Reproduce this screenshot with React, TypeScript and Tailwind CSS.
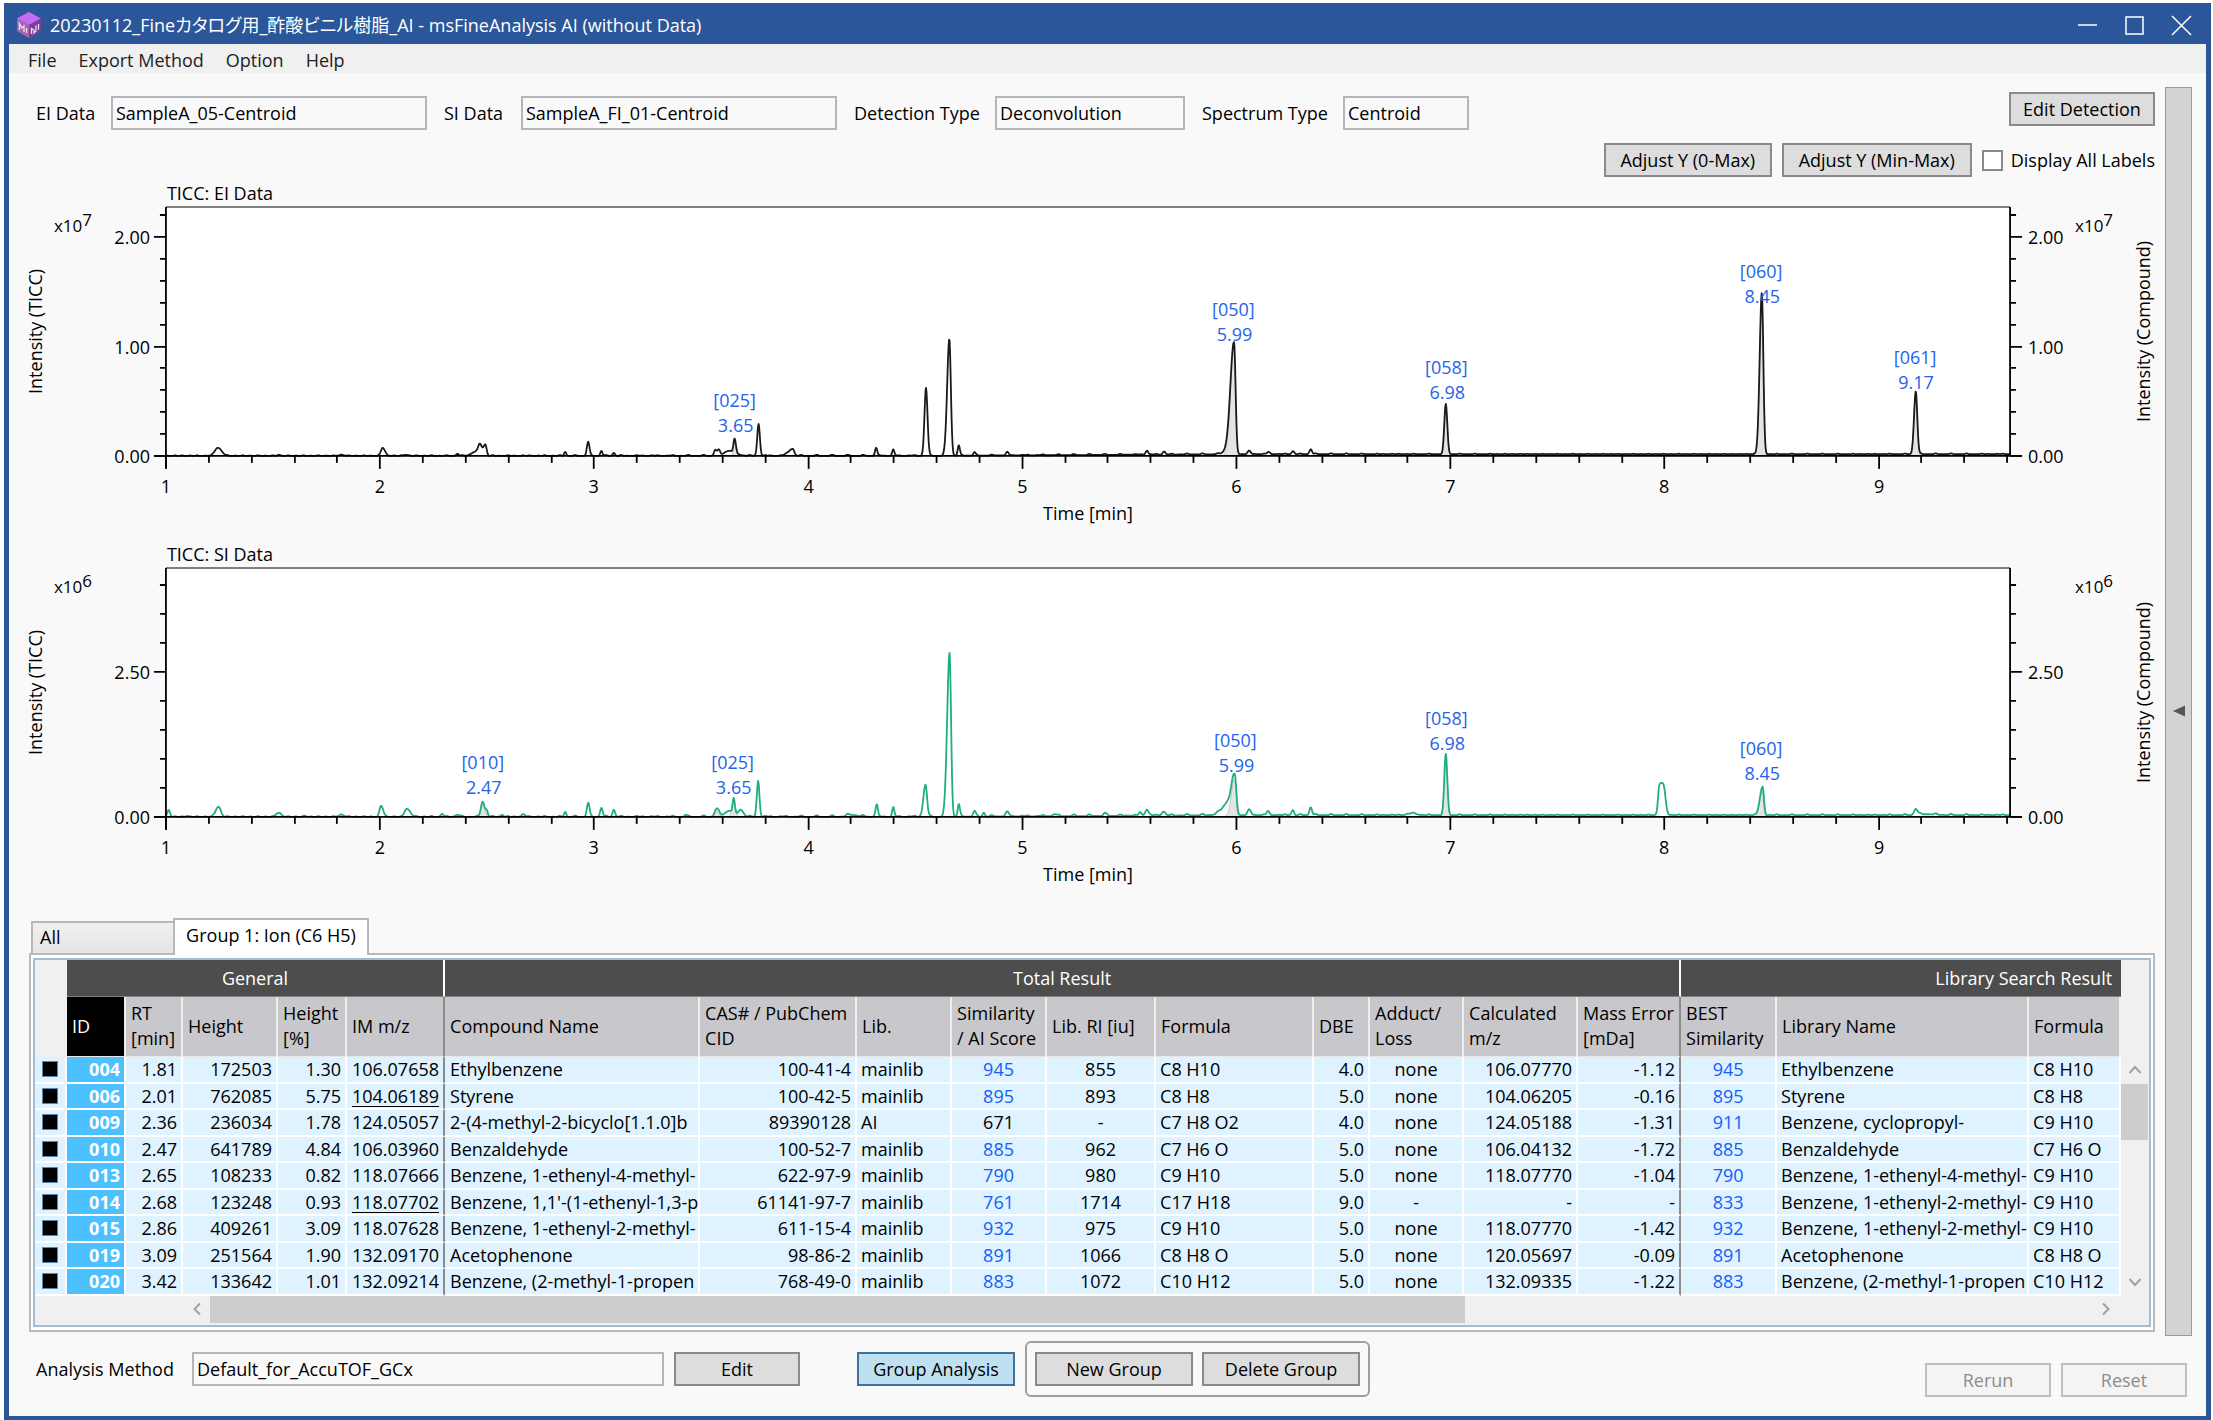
import { useState } from 'react';
import type { ReactNode } from 'react';
import clsx from 'clsx';

// [retention time, height in px, left sigma, right sigma]
type Peak = [number, number, number, number];

interface PeakLabel {
  id: string;
  rt: string;
  x: number;
  y: number;
}

interface ChartProps {
  title: string;
  exponent: string;
  color: string;
  peaks: Peak[];
  compounds: Peak[];
  labels: PeakLabel[];
  noise: number;
  unit: number;
  minorStep: number;
  majorEvery: number;
  minorCount: number;
}

const LEFT = 146;
const RIGHT = 1991;
const TOP = 25;
const BASE = 274;
const PER_MIN = 214.2;

const timeToX = (t: number) => LEFT + (t - 1) * PER_MIN;

function gauss(t: number, [center, height, left, right]: Peak) {
  const s = t < center ? left : right;
  return height * Math.exp(-((t - center) ** 2) / (2 * s * s));
}

function baseline(t: number, noise: number) {
  const drift = Math.min(1.6, Math.max(0, (t - 4.6) * 1.2));
  const ripple = Math.max(0, Math.sin(t * 47) * Math.sin(t * 131) + Math.sin(t * 83) * 0.4);
  return drift + ripple * noise;
}

function tracePath(peaks: Peak[], noise: number) {
  const points: string[] = [];
  for (let x = LEFT; x <= RIGHT; x += 0.5) {
    const t = 1 + (x - LEFT) / PER_MIN;
    const h = peaks.reduce((sum, p) => sum + gauss(t, p), baseline(t, noise));
    points.push(`${x} ${(BASE - h).toFixed(1)}`);
  }
  return `M${points.join('L')}`;
}

function compoundPath(peak: Peak) {
  const from = timeToX(peak[0] - peak[2] * 3);
  const to = timeToX(peak[0] + peak[3] * 3);
  const points = [`${from} ${BASE}`];
  for (let x = from; x <= to; x += 0.5) {
    points.push(`${x} ${(BASE - gauss(1 + (x - LEFT) / PER_MIN, peak)).toFixed(1)}`);
  }
  return `M${points.join('L')}L${to} ${BASE}Z`;
}

const EI_PEAKS: Peak[] = [
  [1.242, 8, 0.014, 0.018], [1.526, 1, 0.006, 0.006], [1.82, 1, 0.01, 0.01],
  [2.012, 8, 0.008, 0.011], [2.12, 1, 0.01, 0.01], [2.362, 2, 0.006, 0.006],
  [2.445, 4, 0.018, 0.014], [2.467, 11, 0.008, 0.01], [2.492, 11, 0.008, 0.006],
  [2.865, 4, 0.005, 0.005], [2.972, 14, 0.006, 0.006], [3.034, 5, 0.005, 0.005],
  [3.092, 3, 0.005, 0.005], [3.566, 6, 0.006, 0.006], [3.582, 5, 0.006, 0.006],
  [3.63, 5, 0.022, 0.03], [3.656, 13, 0.005, 0.006], [3.768, 32, 0.006, 0.006],
  [3.928, 7, 0.02, 0.007], [4.317, 8, 0.005, 0.005], [4.397, 6, 0.005, 0.005],
  [4.55, 68, 0.007, 0.007], [4.659, 117, 0.01, 0.007], [4.703, 10, 0.005, 0.005],
  [4.776, 3, 0.005, 0.005], [4.93, 3, 0.006, 0.006], [5.582, 4, 0.006, 0.006],
  [5.662, 3, 0.006, 0.006], [5.989, 110, 0.016, 0.007], [5.97, 8, 0.02, 0.01],
  [6.06, 3, 0.007, 0.007], [6.149, 2, 0.007, 0.007], [6.264, 3, 0.006, 0.006],
  [6.347, 5, 0.006, 0.006], [6.978, 50, 0.007, 0.007], [8.454, 161, 0.01, 0.007],
  [9.173, 63, 0.008, 0.007],
];

const EI_COMPOUNDS: Peak[] = [
  [3.656, 13, 0.005, 0.006], [5.989, 108, 0.016, 0.007], [6.978, 48, 0.007, 0.007],
  [8.454, 159, 0.01, 0.007], [9.173, 61, 0.008, 0.007],
];

const EI_LABELS: PeakLabel[] = [
  { id: '[025]', rt: '3.65', x: 715, y: 218 },
  { id: '[050]', rt: '5.99', x: 1214, y: 127 },
  { id: '[058]', rt: '6.98', x: 1427, y: 185 },
  { id: '[060]', rt: '8.45', x: 1742, y: 89 },
  { id: '[061]', rt: '9.17', x: 1896, y: 175 },
];

const SI_PEAKS: Peak[] = [
  [1.013, 7, 0.006, 0.006], [1.1, 1, 0.006, 0.006], [1.245, 10, 0.013, 0.011],
  [1.526, 4, 0.012, 0.012], [1.65, 1, 0.006, 0.006], [1.82, 2, 0.012, 0.012],
  [2.005, 11, 0.007, 0.01], [2.124, 8, 0.01, 0.016], [2.29, 3, 0.006, 0.006],
  [2.362, 2, 0.01, 0.01], [2.479, 15, 0.008, 0.007], [2.497, 7, 0.007, 0.006],
  [2.57, 2, 0.006, 0.006], [2.67, 2, 0.01, 0.01], [2.865, 5, 0.005, 0.005],
  [2.972, 14, 0.006, 0.006], [3.034, 9, 0.006, 0.006], [3.092, 7, 0.006, 0.006],
  [3.427, 2, 0.005, 0.005], [3.572, 8, 0.009, 0.01], [3.632, 6, 0.022, 0.02],
  [3.652, 14, 0.005, 0.005], [3.684, 7, 0.011, 0.013], [3.766, 36, 0.006, 0.006],
  [4.2, 2, 0.02, 0.03], [4.32, 12, 0.006, 0.005], [4.397, 9, 0.005, 0.005],
  [4.548, 32, 0.01, 0.007], [4.66, 164, 0.011, 0.007], [4.703, 12, 0.005, 0.005],
  [4.776, 5, 0.006, 0.006], [4.82, 4, 0.005, 0.005], [4.93, 4, 0.008, 0.008],
  [5.15, 2, 0.008, 0.008], [5.39, 2, 0.008, 0.008], [5.55, 3, 0.006, 0.006],
  [5.582, 6, 0.008, 0.008], [5.66, 4, 0.008, 0.008], [5.972, 15, 0.032, 0.014],
  [5.993, 35, 0.013, 0.007], [6.06, 5, 0.008, 0.008], [6.147, 4, 0.006, 0.006],
  [6.264, 5, 0.007, 0.005], [6.347, 8, 0.006, 0.006], [6.82, 2, 0.02, 0.02],
  [6.978, 61, 0.007, 0.007], [7.975, 26, 0.006, 0.011], [7.996, 25, 0.011, 0.009],
  [8.458, 28, 0.013, 0.006], [9.173, 6, 0.008, 0.009], [9.22, 1, 0.03, 0.05],
];

const SI_COMPOUNDS: Peak[] = [
  [2.482, 15, 0.01, 0.008], [3.572, 6, 0.009, 0.01], [3.652, 14, 0.008, 0.008],
  [5.992, 38, 0.015, 0.006], [6.978, 58, 0.007, 0.007], [8.456, 26, 0.012, 0.006],
];

const SI_LABELS: PeakLabel[] = [
  { id: '[010]', rt: '2.47', x: 463, y: 219 },
  { id: '[025]', rt: '3.65', x: 713, y: 219 },
  { id: '[050]', rt: '5.99', x: 1216, y: 197 },
  { id: '[058]', rt: '6.98', x: 1427, y: 175 },
  { id: '[060]', rt: '8.45', x: 1742, y: 205 },
];

function Chart({ title, exponent, color, peaks, compounds, labels, noise, unit, minorStep, majorEvery, minorCount }: ChartProps) {
  const yTicks = Array.from({ length: minorCount + 1 }, (_, i) => ({
    y: Math.round(BASE - i * minorStep * unit),
    text: i % majorEvery === 0 ? (i * minorStep).toFixed(2) : null,
  }));
  const xTicks = Array.from({ length: 44 }, (_, i) => ({
    x: Math.round(timeToX(1 + i * 0.2)),
    text: i % 5 === 0 ? String(1 + i / 5) : null,
  }));
  const middle = (TOP + BASE) / 2;

  return (
    <svg viewBox="0 0 2136 361" className="block h-auto w-full text-[18px]" role="img" aria-label={title}>
      <text x={LEFT + 1} y={18}>{title}</text>
      <rect x={LEFT} y={TOP} width={RIGHT - LEFT} height={BASE - TOP} fill="#fff" />
      <path d={`M${LEFT} ${TOP}H${RIGHT}`} stroke="#808080" strokeWidth={2} />

      {compounds.map((peak) => (
        <path key={peak[0]} d={compoundPath(peak)} fill="#e4e4e6" stroke="#c4c4c4" />
      ))}
      <path d={tracePath(peaks, noise)} fill="none" stroke={color} strokeWidth={1.8} strokeLinejoin="round" />

      <path d={`M${LEFT} ${TOP}V${BASE + 13}M${RIGHT} ${TOP}V${BASE}M${LEFT - 12} ${BASE}H${RIGHT + 12}`} stroke="#000" strokeWidth={1.8} fill="none" />
      {yTicks.map(({ y, text }) => (
        <g key={y}>
          <path
            d={text ? `M${LEFT - 12} ${y}H${LEFT}M${RIGHT} ${y}H${RIGHT + 12}` : `M${LEFT - 6} ${y}H${LEFT}M${RIGHT} ${y}H${RIGHT + 6}`}
            stroke="#000"
            strokeWidth={1.8}
          />
          {text && (
            <>
              <text x={LEFT - 16} y={y + 7} textAnchor="end">{text}</text>
              <text x={RIGHT + 18} y={y + 7}>{text}</text>
            </>
          )}
        </g>
      ))}
      {xTicks.map(({ x, text }) => (
        <g key={x}>
          <path d={`M${x} ${BASE}V${text ? BASE + 13 : BASE + 7}`} stroke="#000" strokeWidth={1.8} />
          {text && <text x={x} y={BASE + 37} textAnchor="middle">{text}</text>}
        </g>
      ))}

      {labels.map(({ id, rt, x, y }) => (
        <g key={id} fill="#2563eb" textAnchor="middle">
          <text x={x} y={y + 7}>{id}</text>
          <text x={x + 1} y={y + 32}>{rt}</text>
        </g>
      ))}

      <g className="text-[17px]">
        <text x={34} y={50}>x10<tspan dy={-6}>{exponent}</tspan></text>
        <text x={2056} y={50}>x10<tspan dy={-6}>{exponent}</tspan></text>
      </g>
      <text transform={`translate(22 ${middle}) rotate(-90)`} textAnchor="middle">Intensity (TICC)</text>
      <text transform={`translate(2131 ${middle}) rotate(-90)`} textAnchor="middle">Intensity (Compound)</text>
      <text x={(LEFT + RIGHT) / 2} y={338} textAnchor="middle">Time [min]</text>
    </svg>
  );
}

interface ReadonlyFieldProps {
  id: string;
  label: string;
  value: string;
  labelWidth: string;
  width: string;
}

function ReadonlyField({ id, label, value, labelWidth, width }: ReadonlyFieldProps) {
  return (
    <div className="flex items-center">
      <label htmlFor={id} className={clsx('shrink-0 whitespace-nowrap', labelWidth)}>{label}</label>
      <input
        id={id}
        readOnly
        value={value}
        className={clsx('h-[34px] min-w-0 border-2 border-[#b4b6ba] bg-[#f9f9f9] px-[3px] outline-none', width)}
      />
    </div>
  );
}

interface ButtonProps {
  children: ReactNode;
  className?: string;
  active?: boolean;
  disabled?: boolean;
}

function Button({ children, className, active, disabled }: ButtonProps) {
  return (
    <button
      type="button"
      disabled={disabled}
      className={clsx(
        'h-[34px] shrink-0 whitespace-nowrap border-2',
        active && 'border-[#3f719c] bg-[#bee0f0]',
        disabled && 'border-[#bcbebf] bg-[#f4f4f4] text-[#8c8c8c]',
        !active && !disabled && 'border-[#8a8a8a] bg-[#dddddd]',
        className,
      )}
    >
      {children}
    </button>
  );
}

const COLUMNS = [
  { label: 'ID', width: 59, cell: 'bg-[#4dc1ff] pr-[4px] text-right font-bold text-white' },
  { label: 'RT\n[min]', width: 57, cell: 'pr-[4px] text-right' },
  { label: 'Height', width: 95, cell: 'pr-[4px] text-right' },
  { label: 'Height\n[%]', width: 69, cell: 'pr-[4px] text-right' },
  { label: 'IM m/z', width: 98, cell: 'pr-[4px] text-right' },
  { label: 'Compound Name', width: 255, cell: 'pl-[5px]' },
  { label: 'CAS# / PubChem\nCID', width: 157, cell: 'pr-[4px] text-right' },
  { label: 'Lib.', width: 95, cell: 'pl-1' },
  { label: 'Similarity\n/ AI Score', width: 95, cell: 'text-center text-blue-600' },
  { label: 'Lib. RI [iu]', width: 109, cell: 'text-center' },
  { label: 'Formula', width: 158, cell: 'pl-1' },
  { label: 'DBE', width: 56, cell: 'pr-[4px] text-right' },
  { label: 'Adduct/\nLoss', width: 94, cell: 'text-center' },
  { label: 'Calculated\nm/z', width: 114, cell: 'pr-[4px] text-right' },
  { label: 'Mass Error\n[mDa]', width: 103, cell: 'pr-[4px] text-right' },
  { label: 'BEST\nSimilarity', width: 96, cell: 'text-center text-blue-600' },
  { label: 'Library Name', width: 252, cell: 'pl-1' },
  { label: 'Formula', width: 92, cell: 'pl-1' },
];

// columns that end a header group get a dark divider
const GROUP_ENDS = [4, 14];

const ROWS = [
  ['004', '1.81', '172503', '1.30', '106.07658', 'Ethylbenzene', '100-41-4', 'mainlib', '945', '855', 'C8 H10', '4.0', 'none', '106.07770', '-1.12', '945', 'Ethylbenzene', 'C8 H10'],
  ['006', '2.01', '762085', '5.75', '104.06189', 'Styrene', '100-42-5', 'mainlib', '895', '893', 'C8 H8', '5.0', 'none', '104.06205', '-0.16', '895', 'Styrene', 'C8 H8'],
  ['009', '2.36', '236034', '1.78', '124.05057', '2-(4-methyl-2-bicyclo[1.1.0]b', '89390128', 'AI', '671', '-', 'C7 H8 O2', '4.0', 'none', '124.05188', '-1.31', '911', 'Benzene, cyclopropyl-', 'C9 H10'],
  ['010', '2.47', '641789', '4.84', '106.03960', 'Benzaldehyde', '100-52-7', 'mainlib', '885', '962', 'C7 H6 O', '5.0', 'none', '106.04132', '-1.72', '885', 'Benzaldehyde', 'C7 H6 O'],
  ['013', '2.65', '108233', '0.82', '118.07666', 'Benzene, 1-ethenyl-4-methyl-', '622-97-9', 'mainlib', '790', '980', 'C9 H10', '5.0', 'none', '118.07770', '-1.04', '790', 'Benzene, 1-ethenyl-4-methyl-', 'C9 H10'],
  ['014', '2.68', '123248', '0.93', '118.07702', "Benzene, 1,1'-(1-ethenyl-1,3-p", '61141-97-7', 'mainlib', '761', '1714', 'C17 H18', '9.0', '-', '-', '-', '833', 'Benzene, 1-ethenyl-2-methyl-', 'C9 H10'],
  ['015', '2.86', '409261', '3.09', '118.07628', 'Benzene, 1-ethenyl-2-methyl-', '611-15-4', 'mainlib', '932', '975', 'C9 H10', '5.0', 'none', '118.07770', '-1.42', '932', 'Benzene, 1-ethenyl-2-methyl-', 'C9 H10'],
  ['019', '3.09', '251564', '1.90', '132.09170', 'Acetophenone', '98-86-2', 'mainlib', '891', '1066', 'C8 H8 O', '5.0', 'none', '120.05697', '-0.09', '891', 'Acetophenone', 'C8 H8 O'],
  ['020', '3.42', '133642', '1.01', '132.09214', 'Benzene, (2-methyl-1-propen', '768-49-0', 'mainlib', '883', '1072', 'C10 H12', '5.0', 'none', '132.09335', '-1.22', '883', 'Benzene, (2-methyl-1-propen', 'C10 H12'],
];

const UNDERLINED = ['104.06189', '118.07702'];

function ResultTable() {
  return (
    <table className="w-full table-fixed border-separate border-spacing-0">
      <colgroup>
        <col style={{ width: 32 }} />
        {COLUMNS.map((column, i) => (
          <col key={i} style={{ width: column.width }} />
        ))}
      </colgroup>
      <thead>
        <tr className="h-[37px] text-white">
          <td rowSpan={2} className="p-0" />
          <th colSpan={5} className="border-r-2 border-b border-r-white border-b-[#808080] bg-[#4d4d4d] p-0 font-medium">General</th>
          <th colSpan={10} className="border-r-2 border-b border-r-white border-b-[#808080] bg-[#4d4d4d] p-0 font-medium">Total Result</th>
          <th colSpan={3} className="border-b border-b-[#808080] bg-[#4d4d4d] p-0 pr-[9px] text-right font-medium">Library Search Result</th>
        </tr>
        <tr className="h-[60px]">
          {COLUMNS.map((column, i) => (
            <th
              key={i}
              className={clsx(
                'border-r-2 border-b border-b-[#e8e8e8] p-0 pl-[5px] text-left align-middle font-normal leading-[25px] whitespace-pre',
                i === 0 ? 'bg-black text-white' : 'bg-[#c8c8cc]',
                GROUP_ENDS.includes(i) ? 'border-r-[#8c8c8c]' : 'border-r-[#eeeeee]',
              )}
            >
              {column.label}
            </th>
          ))}
        </tr>
      </thead>
      <tbody>
        {ROWS.map((row) => (
          <tr key={row[0]} className="odd:h-[27px] even:h-[26px]">
            <td className="border-r-2 border-b-2 border-white bg-[#def2ff] p-0">
              <div className="mx-auto size-4 border border-[#5b87ad] bg-black" />
            </td>
            {row.map((value, i) => (
              <td
                key={i}
                className={clsx(
                  'border-r-2 border-b-2 border-b-white py-0 leading-6 whitespace-nowrap',
                  i > 0 && 'bg-[#def2ff]',
                  COLUMNS[i].cell,
                  GROUP_ENDS.includes(i) ? 'border-r-[#8c8c8c]' : 'border-r-white',
                  value === '671' && 'text-black!',
                  UNDERLINED.includes(value) && 'underline underline-offset-3',
                )}
              >
                {value}
              </td>
            ))}
          </tr>
        ))}
      </tbody>
    </table>
  );
}

function Chevron({ d }: { d: string }) {
  return (
    <svg viewBox="0 0 16 16" className="size-4" fill="none" stroke="#a0a0a0" strokeWidth={2}>
      <path d={d} />
    </svg>
  );
}

function VerticalScrollbar() {
  return (
    <div className="flex w-[27px] shrink-0 flex-col pt-[97px]">
      <button type="button" aria-label="Scroll up" className="flex h-[27px] items-center justify-center">
        <Chevron d="M2.500 11L8 5L13.500 11" />
      </button>
      <div className="flex-1">
        <div className="h-14 bg-[#cdcdcd]" />
      </div>
      <button type="button" aria-label="Scroll down" className="flex h-[27px] items-center justify-center">
        <Chevron d="M2.500 5L8 11L13.500 5" />
      </button>
    </div>
  );
}

function HorizontalScrollbar() {
  return (
    <div className="flex h-[27px] pr-[30px] pl-[148px]">
      <button type="button" aria-label="Scroll left" className="flex w-[27px] items-center justify-center">
        <Chevron d="M11 2.500L5.500 8L11 13.500" />
      </button>
      <div className="flex-1">
        <div className="h-full w-2/3 bg-[#cdcdcd]" />
      </div>
      <button type="button" aria-label="Scroll right" className="flex w-[27px] items-center justify-center">
        <Chevron d="M5 2.500L10.500 8L5 13.500" />
      </button>
    </div>
  );
}

function AppIcon() {
  return (
    <svg viewBox="0 0 26 26" className="size-[26px]" aria-hidden="true">
      <path d="M13 0L25 6.500V19L13 26L1 19V6.500Z" fill="#8a4fb0" />
      <path d="M13 0L25 6.500L13 13L1 6.500Z" fill="#c56bf5" />
      <path d="M1 6.500L13 13V26L1 19Z" fill="#a566a8" />
      <path d="M13 13L25 6.500V19L13 26Z" fill="#7a3f9c" />
      <path d="M3.500 18V11.500L6 16L8 14V20M10.500 21V16M15.500 22V16.500L18 18V21L20 19V13.500M22.500 12V17.500" fill="none" stroke="#f0dcee" strokeWidth={1.300} />
    </svg>
  );
}

function TitleBar() {
  return (
    <header className="flex h-[41px] items-center justify-between bg-[#2b579a] pt-[3px] pr-[19px] pl-3 text-white">
      <div className="flex items-center gap-2">
        <AppIcon />
        <h1 className="whitespace-nowrap [font-feature-settings:'palt']">
          20230112_Fineカタログ用_酢酸ビニル樹脂_AI - msFineAnalysis AI (without Data)
        </h1>
      </div>
      <div className="flex items-center gap-[26px]">
        <button type="button" aria-label="Minimize">
          <svg viewBox="0 0 21 21" className="size-[21px]" stroke="#fff" strokeWidth={1.500}><path d="M1 10H20" /></svg>
        </button>
        <button type="button" aria-label="Maximize">
          <svg viewBox="0 0 21 21" className="size-[21px]" fill="none" stroke="#fff" strokeWidth={1.500}><path d="M2 2H19V19H2Z" /></svg>
        </button>
        <button type="button" aria-label="Close">
          <svg viewBox="0 0 21 21" className="size-[21px]" stroke="#fff" strokeWidth={1.500}><path d="M1 1L20 20M20 1L1 20" /></svg>
        </button>
      </div>
    </header>
  );
}

export default function App() {
  const [showAll, setShowAll] = useState(false);

  return (
    <div className="min-h-screen bg-white pt-[3px] pr-[2px] pl-1 font-['Open_Sans','Noto_Sans_CJK_JP',sans-serif] text-[18px] leading-6 text-black">
      <TitleBar />
      <div className="border-x-[5px] border-b-[5px] border-[#2b579a] bg-[#f9f9f9] pb-[19px]">
        <nav className="flex h-[29px] items-center gap-[22px] bg-[#f0f0f0] pt-[2px] pl-[19px] text-[#222]">
          <button type="button">File</button>
          <button type="button">Export Method</button>
          <button type="button">Option</button>
          <button type="button">Help</button>
        </nav>

        <div className="flex gap-[10px] pt-[14px] pr-[14px] pl-[11px]">
          <main className="min-w-0 flex-1 pt-[5px]">
            <div className="flex items-start justify-between">
              <div className="flex min-w-0 gap-[17px] pt-1 pl-4">
                <ReadonlyField id="ei-data" label="EI Data" value="SampleA_05-Centroid" labelWidth="w-[75px]" width="w-[316px]" />
                <ReadonlyField id="si-data" label="SI Data" value="SampleA_FI_01-Centroid" labelWidth="w-[77px]" width="w-[316px]" />
                <ReadonlyField id="detection-type" label="Detection Type" value="Deconvolution" labelWidth="w-[141px]" width="w-[190px]" />
                <ReadonlyField id="spectrum-type" label="Spectrum Type" value="Centroid" labelWidth="w-[141px]" width="w-[126px]" />
              </div>
              <Button className="w-[146px]">Edit Detection</Button>
            </div>

            <div className="flex items-center justify-end gap-[10px] pt-[13px] pb-[5px]">
              <Button className="w-[168px]">Adjust Y (0-Max)</Button>
              <Button className="w-[190px]">Adjust Y (Min-Max)</Button>
              <label className="flex items-center gap-2">
                <input
                  type="checkbox"
                  checked={showAll}
                  onChange={(e) => setShowAll(e.target.checked)}
                  className="size-[21px] appearance-none border-2 border-[#8a8a8a] bg-white checked:bg-black"
                />
                Display All Labels
              </label>
            </div>

            <Chart
              title="TICC: EI Data"
              exponent="7"
              color="#1a1a1a"
              peaks={EI_PEAKS}
              compounds={EI_COMPOUNDS}
              labels={EI_LABELS}
              noise={0.8}
              unit={109.5}
              minorStep={0.2}
              majorEvery={5}
              minorCount={11}
            />
            <Chart
              title="TICC: SI Data"
              exponent="6"
              color="#1fae7c"
              peaks={SI_PEAKS}
              compounds={SI_COMPOUNDS}
              labels={SI_LABELS}
              noise={1.2}
              unit={57.9}
              minorStep={0.5}
              majorEvery={5}
              minorCount={8}
            />

            <section className="pt-[14px] pl-[9px]">
              <div role="tablist" className="flex items-end pl-[2px]">
                <button type="button" role="tab" aria-selected="false" className="h-8 w-[142px] border-2 border-r-0 border-b-0 border-[#b8b8b8] bg-linear-to-b from-[#f0f0f0] to-[#e5e5e5] pb-[2px] pl-[7px] text-left">
                  All
                </button>
                <button type="button" role="tab" aria-selected="true" className="relative -mb-[2px] h-[37px] w-[196px] border-2 border-b-0 border-[#b8b8b8] bg-white pb-1 text-center">
                  Group 1: Ion (C6 H5)
                </button>
              </div>
              <div className="border-2 border-[#bababa] bg-white px-[2px] py-[3px]">
                <div className="border-2 border-[#a3bdd6] bg-[#f0f0f0] pb-[2px]">
                  <div className="flex pr-px">
                    <div className="min-w-0 flex-1 overflow-hidden">
                      <ResultTable />
                    </div>
                    <VerticalScrollbar />
                  </div>
                  <HorizontalScrollbar />
                </div>
              </div>
            </section>
          </main>

          <button type="button" aria-label="Expand side panel" className="mb-[-4px] flex w-[27px] shrink-0 items-center justify-center border border-[#9a9a9a] bg-[#d3d3d3]">
            <svg viewBox="0 0 12 12" className="size-3"><path d="M12 0.500V11.500L0 6Z" fill="#555" /></svg>
          </button>
        </div>

        <footer className="flex items-start justify-between pt-[9px] pr-[19px] pl-[27px]">
          <div className="flex items-center">
            <ReadonlyField id="analysis-method" label="Analysis Method" value="Default_for_AccuTOF_GCx" labelWidth="w-[156px]" width="w-[472px]" />
            <Button className="ml-[10px] w-[126px]">Edit</Button>
            <Button active className="ml-[57px] w-[158px]">Group Analysis</Button>
            <div className="ml-[10px] flex gap-[9px] rounded-md border-2 border-[#a0a0a0] px-2 py-[9px]">
              <Button className="w-[158px]">New Group</Button>
              <Button className="w-[158px]">Delete Group</Button>
            </div>
          </div>
          <div className="flex gap-[10px] pt-[22px]">
            <Button disabled className="w-[126px]">Rerun</Button>
            <Button disabled className="w-[126px]">Reset</Button>
          </div>
        </footer>
      </div>
    </div>
  );
}
